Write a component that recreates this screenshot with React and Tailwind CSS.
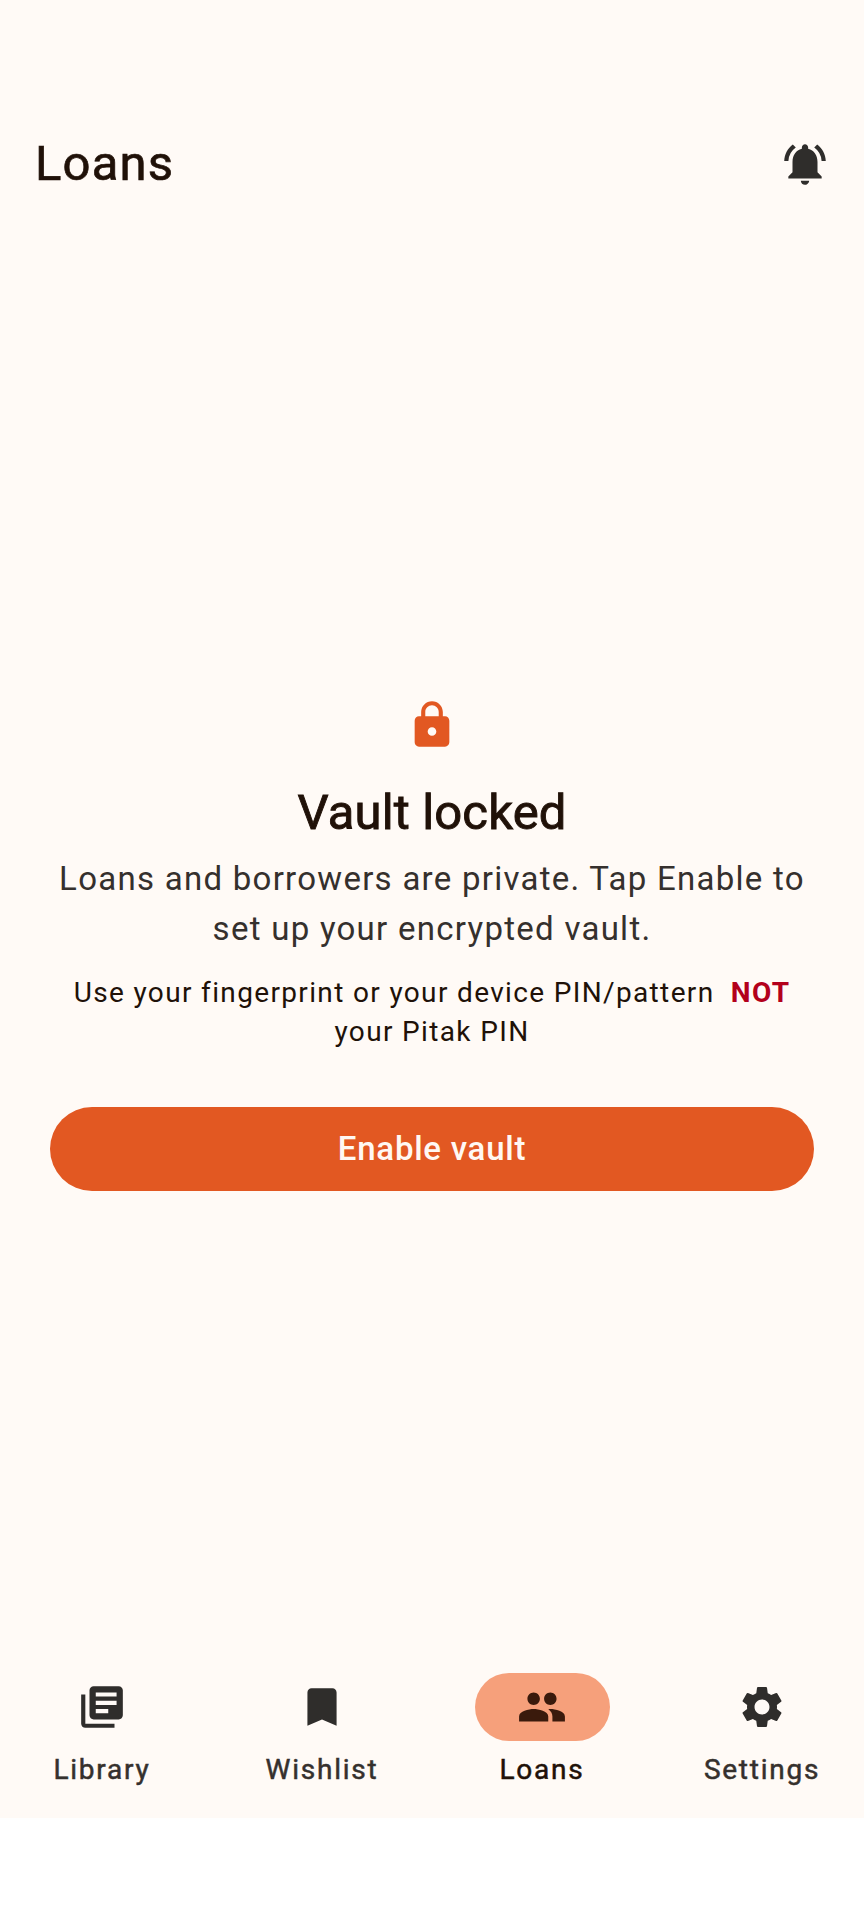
import React from "react";
import { MdNotificationsActive, MdLock, MdLibraryBooks, MdBookmark, MdPeople, MdSettings } from "react-icons/md";

const tabs = [
  { label: "Library", icon: MdLibraryBooks },
  { label: "Wishlist", icon: MdBookmark },
  { label: "Loans", icon: MdPeople, active: true },
  { label: "Settings", icon: MdSettings },
];

export default function App() {
  return (
    <div className="h-[1920px] overflow-hidden bg-white font-['Roboto',sans-serif]">
      <div className="flex h-[1818px] flex-col bg-[#fffaf6]">
        {/* top bar */}
        <div className="mt-[120px] flex h-[88px] items-center justify-between pr-[34px] pl-[35px]">
          <h1 className="text-[49px] leading-[52px] font-normal tracking-[1.2px] text-[#201108] [-webkit-text-stroke:0.7px]">Loans</h1>
          <MdNotificationsActive className="text-[#2f2d2b]" size={50} />
        </div>

        {/* locked state */}
        <div className="flex flex-1 flex-col items-center px-[50px] pt-[491px]">
          <MdLock className="text-[#e25822]" size={52} />
          <h2 className="mt-[32px] text-[49px] leading-[60px] font-normal tracking-[0.15px] text-[#201108] [-webkit-text-stroke:0.9px]">Vault locked</h2>
          <p className="mt-[11px] text-center text-[33px] leading-[50px] tracking-[1.27px] text-[#35302d]">
            Loans and borrowers are private. Tap Enable to set up your encrypted vault.
          </p>
          <p className="mt-[19px] text-center text-[28px] leading-[39px] tracking-[1.35px] text-[#201108]">
            Use your fingerprint or your device PIN/pattern <span className="ml-2 font-bold text-[#b3001b]">NOT</span> your Pitak PIN
          </p>
          <button className="mt-[56px] h-[84px] w-full rounded-full bg-[#e25822] text-[33px] font-medium tracking-[0.75px] text-[#fff8f3]">
            Enable vault
          </button>
        </div>

        {/* bottom nav */}
        <nav className="grid h-[147px] grid-cols-[repeat(4,220px)] justify-center">
          {tabs.map((t) => {
            const Icon = t.icon;
            return (
              <div key={t.label} className="flex flex-col items-center pt-[2px]">
                <div className={"flex h-[68px] w-[135px] items-center justify-center rounded-full " + (t.active ? "bg-[#f6a07b]" : "")}>
                  <Icon className={t.active ? "text-[#3a1a0c]" : "text-[#2f2d2b]"} size={50} />
                </div>
                <span className={"mt-[11px] text-[28px] leading-[36px] font-normal tracking-[1.75px] [-webkit-text-stroke:0.5px] " + (t.active ? "text-[#201108]" : "text-[#35302d]")}>
                  {t.label}
                </span>
              </div>
            );
          })}
        </nav>
      </div>
    </div>
  );
}
